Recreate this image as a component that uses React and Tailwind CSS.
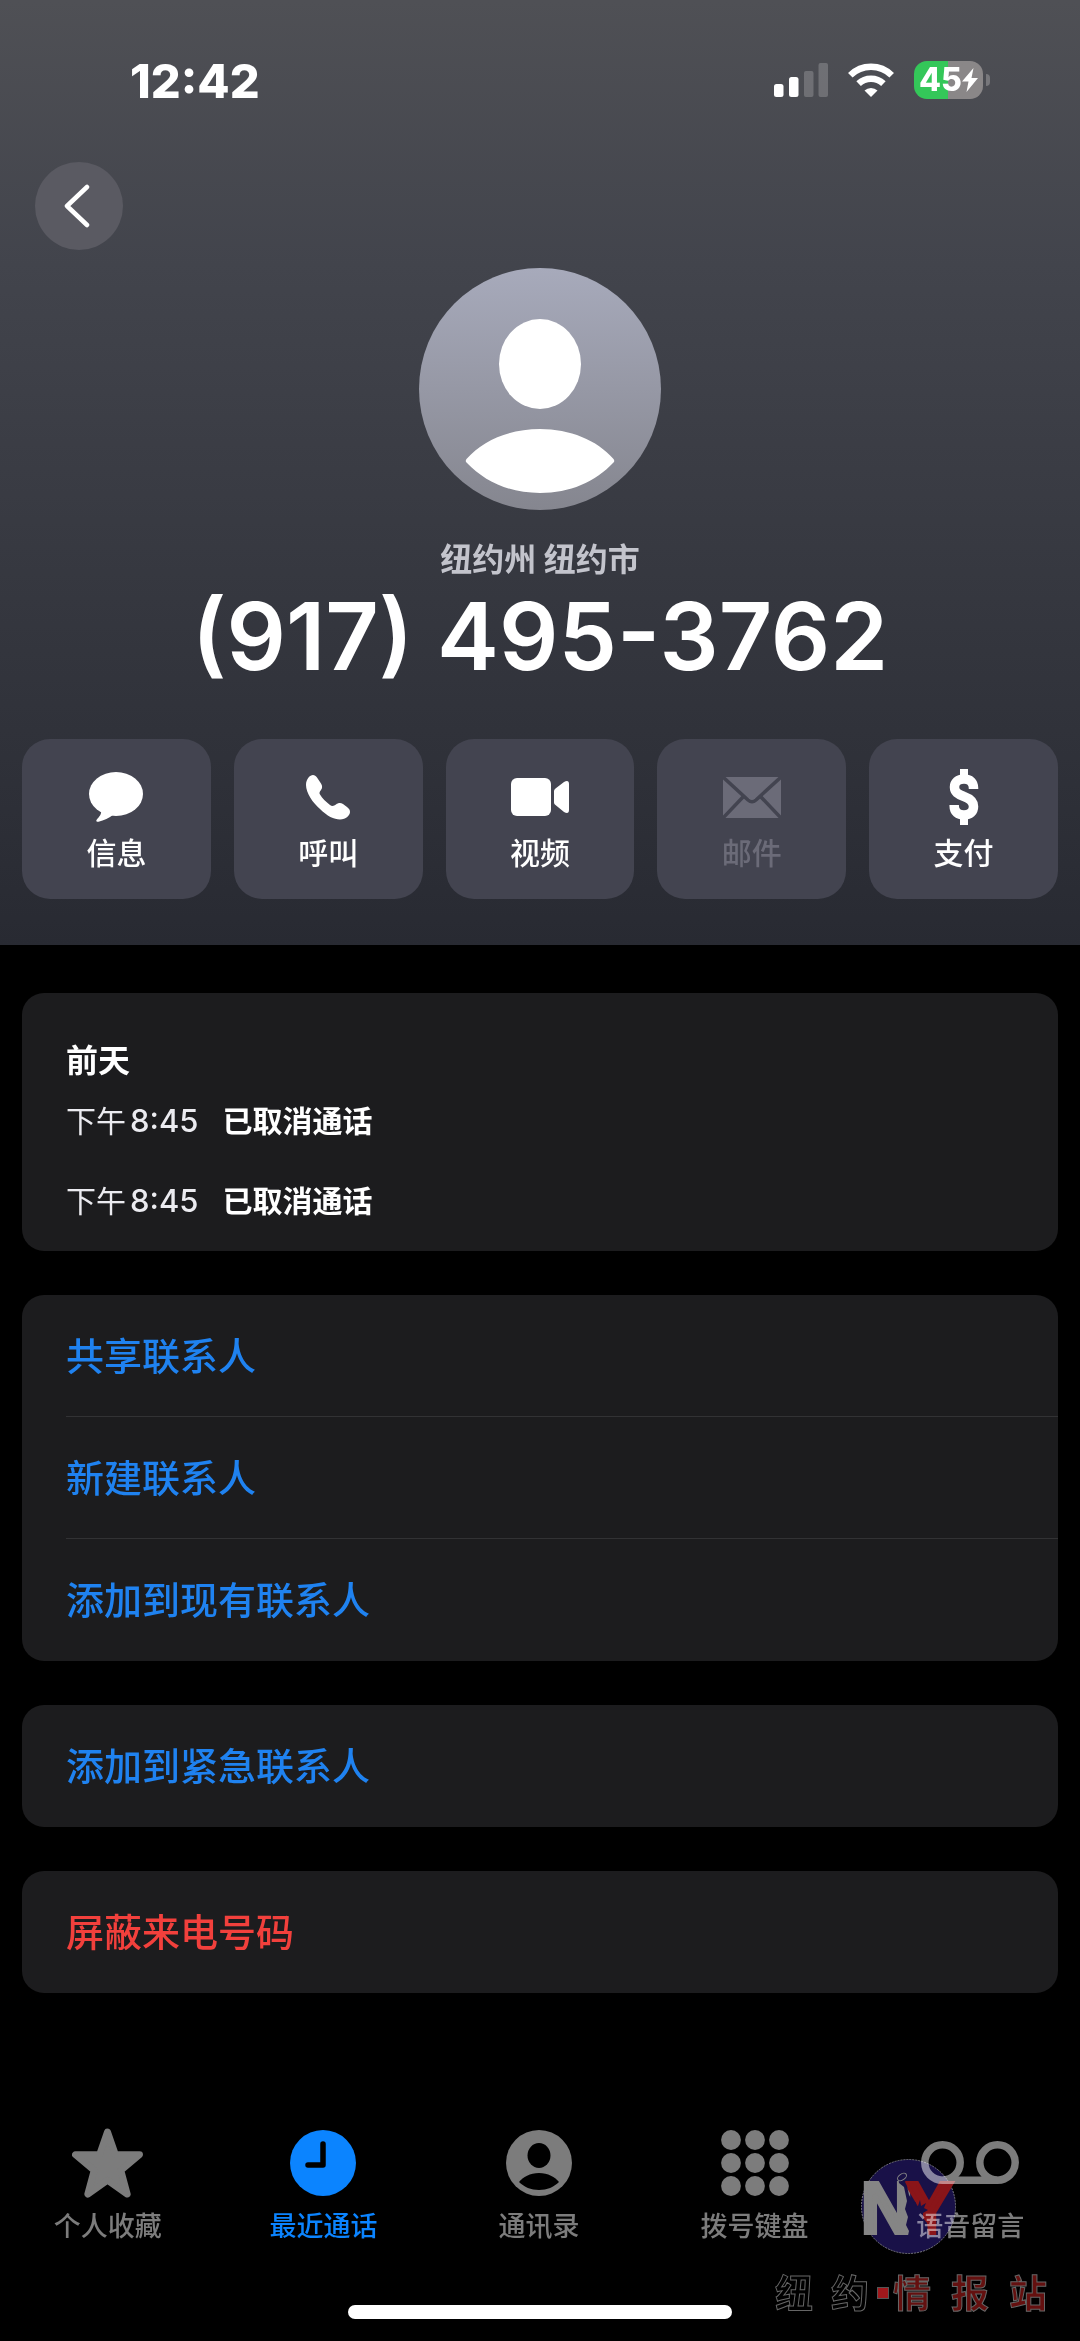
import React, { useState } from 'react';

const MessageIcon = () => (
  <svg width="54" height="50" viewBox="0 0 54 50" fill="currentColor" aria-hidden="true">
    <ellipse cx="27" cy="22" rx="27" ry="22" />
    <path d="M12 38C13 42 10 45 7.500 48C6.800 49.500 8 50 9.500 49.700C15 48.500 20 46 24.500 42.500Z" />
  </svg>
);

const PhoneIcon = () => (
  <svg width="44" height="45" viewBox="0 0 44 45" fill="currentColor" aria-hidden="true">
    <path d="M7 0C4 0 0 4 0 10C0 18 7 28 14 34C21 41 28 44.500 34 44.500C40 44.500 44 40 44 37C44 35 43 33.500 41 32L37 29C34.500 27.500 32 28 30 29.500C28 31 26 31.500 24 30C20 27 16 23 14 19.500C13 18 13.500 17 15 15C16.500 13 16.500 11 15 8.500L11 2.500C10 1 8.500 0 7 0Z" />
  </svg>
);

const VideoIcon = () => (
  <svg width="58" height="38" viewBox="0 0 58 38" fill="currentColor" aria-hidden="true">
    <rect width="40" height="38" rx="6" />
    <path d="M43 13Q43 11.500 44.500 10.500L53 4Q58 1.500 58 6V32Q58 36.500 53 34L44.500 27Q43 26 43 24.500Z" />
  </svg>
);

const MailIcon = () => (
  <svg width="58" height="41" viewBox="0 0 58 41" aria-hidden="true">
    <rect width="58" height="41" rx="2" fill="currentColor" />
    <g fill="none" stroke="#434450" strokeWidth="3.500">
      <path d="M0 0L25 23Q29 26.500 33 23L58 0" />
      <path d="M20 20L0 41M38 20L58 41" />
    </g>
  </svg>
);

const DollarIcon = () => (
  <svg width="30" height="56" viewBox="0 0 30 56" fill="none" stroke="currentColor" strokeWidth="9.500" aria-hidden="true">
    <path d="M24.500 20V19C24.500 13.500 21 10 15 10C9 10 5.500 13.500 5.500 18C5.500 23 8.500 25 15 27.500C22 30 24.500 33 24.500 37.500C24.500 43 21 46 15 46C9 46 5.200 43 5.200 37V36" />
    <path d="M15 0V9M15 47V56" strokeWidth="8" />
  </svg>
);

const StarIcon = () => (
  <svg width="71" height="70" viewBox="0 0 72 71" fill="currentColor" stroke="currentColor" strokeWidth="7" strokeLinejoin="round" aria-hidden="true">
    <path d="M36 4L44 27H68.500L49.500 43L56 67L36 53L16 67L22.500 43L3.500 27H28Z" />
  </svg>
);

const ClockIcon = () => (
  <svg width="66" height="66" viewBox="0 0 66 66" aria-hidden="true">
    <circle cx="33" cy="33" r="33" fill="currentColor" />
    <path d="M33 14V35H18" fill="none" stroke="#000" strokeWidth="5.500" strokeLinecap="round" strokeLinejoin="round" />
  </svg>
);

const ContactIcon = () => (
  <svg width="66" height="66" viewBox="0 0 66 66" aria-hidden="true">
    <circle cx="33" cy="33" r="33" fill="currentColor" />
    <ellipse cx="33" cy="25.500" rx="11.500" ry="12.500" fill="#000" />
    <path d="M13 52C17 47 24 43 33 43C42 43 49 47 53 52C48 57 41 60 33 60C25 60 18 57 13 52Z" fill="#000" />
  </svg>
);

const KeypadIcon = () => (
  <svg width="68" height="66" viewBox="0 0 68 66" fill="currentColor" aria-hidden="true">
    {[10, 33, 56].map((cy) =>
      [10, 34, 58].map((cx) => <circle key={`${cx}-${cy}`} cx={cx} cy={cy} r="9.900" />)
    )}
  </svg>
);

const VoicemailIcon = () => (
  <svg width="98" height="43" viewBox="0 0 98 43" fill="none" stroke="currentColor" strokeWidth="7.500" aria-hidden="true">
    <circle cx="21.500" cy="21.500" r="17.700" />
    <circle cx="76.500" cy="21.500" r="17.700" />
    <path d="M21.500 39.200H76.500" />
  </svg>
);

const actions = [
  { label: '信息', Icon: MessageIcon },
  { label: '呼叫', Icon: PhoneIcon },
  { label: '视频', Icon: VideoIcon },
  { label: '邮件', Icon: MailIcon, disabled: true },
  { label: '支付', Icon: DollarIcon },
];

const calls = [
  { id: 1, period: '下午', time: '8:45', status: '已取消通话' },
  { id: 2, period: '下午', time: '8:45', status: '已取消通话' },
];

const tabs = [
  { label: '个人收藏', Icon: StarIcon },
  { label: '最近通话', Icon: ClockIcon },
  { label: '通讯录', Icon: ContactIcon },
  { label: '拨号键盘', Icon: KeypadIcon },
  { label: '语音留言', Icon: VoicemailIcon },
];

function StatusBar() {
  return (
    <div className="flex h-15 items-center justify-between pl-[130px] pr-[90px]">
      <span className="text-[47px] font-extrabold leading-none">12:42</span>
      <div className="flex items-center gap-5">
        <svg width="54" height="34" viewBox="0 0 54 34" fill="#fff" aria-hidden="true">
          <rect x="0" y="21" width="9.500" height="13" rx="2.500" />
          <rect x="15" y="14" width="9.500" height="20" rx="2.500" />
          <rect x="30" y="8" width="9.500" height="26" rx="2" fillOpacity="0.2" />
          <rect x="44.500" y="0" width="9.500" height="34" rx="2" fillOpacity="0.2" />
        </svg>
        <svg width="46" height="34" viewBox="0 0 46 34" aria-hidden="true">
          <g fill="none" stroke="#fff" strokeWidth="6.500">
            <path d="M2.300 12.300A29.500 29.500 0 0 1 43.700 12.300" />
            <path d="M10.600 20.700A17.800 17.800 0 0 1 35.400 20.700" />
          </g>
          <path d="M16.500 27.500A9.500 9.500 0 0 1 29.500 27.500L23 34Z" fill="#fff" />
        </svg>
        <div className="flex items-center gap-[3px]">
          <div className="flex h-[38px] w-[69px] items-center justify-center rounded-[13px] bg-linear-to-r from-[#34c759] from-50% to-[#8a8788] to-50%">
            <span className="text-[32px] font-extrabold leading-none">45</span>
            <svg width="16" height="24" viewBox="0 0 16 24" fill="#fff" aria-hidden="true">
              <path d="M11.500 0L0 13.500H6.500L4.500 24L16 10H9.500Z" />
            </svg>
          </div>
          <div className="h-3 w-1 rounded-r-full bg-[#77777b]" />
        </div>
      </div>
    </div>
  );
}

function Card({ children }) {
  return <section className="overflow-hidden rounded-[22px] bg-[#1c1c1e]">{children}</section>;
}

function LinkRow({ children, danger }) {
  return (
    <button
      type="button"
      className={`flex h-[122px] w-full items-center text-left text-[38px] font-medium leading-none ${danger ? 'text-[#f2403c]' : 'text-[#1f82f0]'}`}
    >
      {children}
    </button>
  );
}

function Watermark() {
  return (
    <div className="pointer-events-none absolute bottom-[25px] right-[33px] mix-blend-screen">
      <svg className="ml-[86px]" width="95" height="95" viewBox="0 0 95 95" aria-hidden="true">
        <circle cx="47.500" cy="47.500" r="47" fill="#191148" stroke="#77777f" strokeWidth="1" strokeDasharray="2 1" />
        <text y="74" fontFamily="'Liberation Sans', sans-serif" fontWeight="700" fontSize="72" strokeWidth="4">
          <tspan x="0" fill="#858585" stroke="#858585">N</tspan>
          <tspan x="44" fill="#8a1519" stroke="#8a1519">Y</tspan>
        </text>
        <path d="M37 14L45 13L47 17L44 23L46 27L48 36L53 44L55 43L54 48L57 47L59 41L60 47L65 44L63 49L67 51L62 54L62 59L66 64L68 81H46L48 72L45 66L47 58L44 50L46 42L43 28L38 24Z" fill="#191148" />
        <ellipse cx="41" cy="18" rx="5" ry="3" transform="rotate(-35 41 18)" fill="none" stroke="#858585" strokeWidth="1" />
      </svg>
      <div className="mt-4 flex items-center text-[38px] font-bold leading-[46px] text-black [-webkit-text-stroke:1px_#666]">
        <span className="mr-[18px]">纽</span>
        <span className="mr-2">约</span>
        <span className="mr-1 h-3 w-3 border border-[#555] bg-[#a0181c]" />
        <span className="mr-5 text-[#64100f]">情</span>
        <span className="mr-5 text-[#64100f]">报</span>
        <span className="text-[#64100f]">站</span>
      </div>
    </div>
  );
}

export default function App() {
  const [activeTab, setActiveTab] = useState('最近通话');

  return (
    <div className="relative flex min-h-screen flex-col bg-black font-[Inter,'Noto_Sans_CJK_SC',sans-serif] text-white">
      <header className="bg-linear-to-b from-[#4f5055] via-[#42444c] via-28% to-[#282a32] pb-[46px] pt-[50px]">
        <StatusBar />

        <div className="mt-[52px] pl-[35px]">
          <button type="button" aria-label="返回" className="flex h-22 w-22 items-center justify-center rounded-full bg-[#5a5a62]">
            <svg className="mr-1" width="26" height="44" viewBox="0 0 26 44" fill="none" stroke="#fff" strokeWidth="4.500" strokeLinecap="round" strokeLinejoin="round" aria-hidden="true">
              <path d="M23 3L3 22L23 41" />
            </svg>
          </button>
        </div>

        <div className="mt-[18px] flex flex-col items-center">
          <svg width="242" height="242" viewBox="0 0 242 242" aria-hidden="true">
            <defs>
              <linearGradient id="avatar" x1="0" y1="0" x2="0" y2="1">
                <stop offset="0" stopColor="#a7aabb" />
                <stop offset="1" stopColor="#85868f" />
              </linearGradient>
            </defs>
            <circle cx="121" cy="121" r="121" fill="url(#avatar)" />
            <ellipse cx="121" cy="96" rx="41" ry="45" fill="#fff" />
            <path d="M47.500 191C64 172 91 161 121 161C151 161 178 172 194.500 191Q196 193 194.500 194.500C176 214 151 225 121 225C91 225 66 214 47.500 194.500Q46 193 47.500 191Z" fill="#fff" />
          </svg>
          <p className="mt-7 text-[32px] font-bold leading-11 text-[#c3c4cc]">纽约州 纽约市</p>
          <h1 className="mt-1 text-[93px] font-semibold leading-[100px]">(917) 495-3762</h1>
        </div>

        <div className="mt-[53px] grid grid-cols-5 gap-[23px] px-[22px]">
          {actions.map(({ label, Icon, disabled }) => (
            <button
              key={label}
              type="button"
              disabled={disabled}
              className={`flex flex-col items-center gap-2.5 rounded-[28px] bg-[#434450] pb-7 pt-[30px] ${disabled ? 'text-[#6b6b78]' : 'text-white'}`}
            >
              <span className="flex h-14 items-center"><Icon /></span>
              <span className="text-[30px] font-medium leading-9">{label}</span>
            </button>
          ))}
        </div>
      </header>

      <main className="flex flex-col gap-11 px-[22px] pt-12">
        <Card>
          <div className="px-11 pb-[30px] pt-[46px]">
            <h2 className="text-[32px] font-bold leading-11">前天</h2>
            <ul className="mt-[18px] flex flex-col gap-10">
              {calls.map((call) => (
                <li key={call.id} className="flex items-center gap-6 text-[30px] leading-10">
                  <span className="flex gap-1 text-[#ebebf0]">
                    <span>{call.period}</span>
                    <span className="text-[31px] font-medium">{call.time}</span>
                  </span>
                  <span className="font-bold">{call.status}</span>
                </li>
              ))}
            </ul>
          </div>
        </Card>

        <Card>
          <div className="divide-y divide-[#323234] pl-11">
            <LinkRow>共享联系人</LinkRow>
            <LinkRow>新建联系人</LinkRow>
            <LinkRow>添加到现有联系人</LinkRow>
          </div>
        </Card>

        <Card>
          <div className="pl-11">
            <LinkRow>添加到紧急联系人</LinkRow>
          </div>
        </Card>

        <Card>
          <div className="pl-11">
            <LinkRow danger>屏蔽来电号码</LinkRow>
          </div>
        </Card>
      </main>

      <footer className="mt-auto pb-[22px] pt-10">
        <nav className="grid grid-cols-5 pr-0.5">
          {tabs.map(({ label, Icon }) => (
            <button
              key={label}
              type="button"
              onClick={() => setActiveTab(label)}
              className={`flex flex-col items-center gap-3 ${activeTab === label ? 'text-[#0b84ff]' : 'text-[#7c7c7c]'}`}
            >
              <span className="flex h-[69px] items-center"><Icon /></span>
              <span className="text-[27px] font-medium leading-9">{label}</span>
            </button>
          ))}
        </nav>
        <div className="mx-auto mt-15 h-3.5 w-96 rounded-full bg-white" />
      </footer>

      <Watermark />
    </div>
  );
}
